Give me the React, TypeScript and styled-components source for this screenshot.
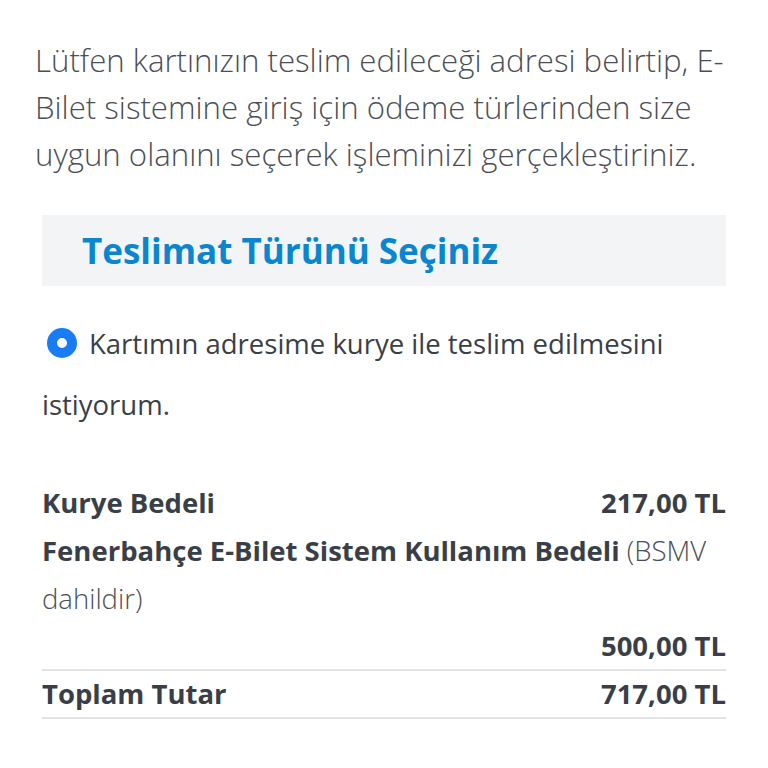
import React from "react";
import styled, { createGlobalStyle } from "styled-components";

const GlobalStyle = createGlobalStyle`
  body {
    margin: 0;
    background: #ffffff;
    font-family: "Open Sans", "Noto Sans", sans-serif;
  }
`;

const App: React.FC = () => {
  return (
    <>
      <GlobalStyle />
      <Root>
        <Intro>
          Lütfen kartınızın teslim edileceği adresi belirtip, E-Bilet sistemine
          giriş için ödeme türlerinden size uygun olanını seçerek işleminizi
          gerçekleştiriniz.
        </Intro>
        <Section>
          <SectionHeader>
            <SectionTitle>Teslimat Türünü Seçiniz</SectionTitle>
          </SectionHeader>
          <Option>
            <Radio />
            Kartımın adresime kurye ile teslim edilmesini istiyorum.
          </Option>
          <Summary>
            <Row>
              <Label>Kurye Bedeli</Label>
              <Amount>217,00 TL</Amount>
            </Row>
            <Block>
              <Label>Fenerbahçe E-Bilet Sistem Kullanım Bedeli</Label>{" "}
              <Note>(BSMV dahildir)</Note>
            </Block>
            <Row $bordered>
              <span />
              <Amount>500,00 TL</Amount>
            </Row>
            <Row $bordered>
              <Label>Toplam Tutar</Label>
              <Amount>717,00 TL</Amount>
            </Row>
          </Summary>
        </Section>
      </Root>
    </>
  );
};

export default App;

const Root = styled.div`
  width: 768px;
  padding: 37px 42px 0 35px;
  box-sizing: border-box;
`;
const Intro = styled.p`
  margin: 0 -5px 0 0;
  font-size: 31.2px;
  font-weight: 300;
  line-height: 47px;
  color: #4b4f55;
`;
const Section = styled.div`
  margin-top: 37px;
  padding-left: 7px;
`;
const SectionHeader = styled.div`
  background: #f3f4f6;
  height: 71px;
  display: flex;
  align-items: center;
  padding-left: 40px;
`;
const SectionTitle = styled.h2`
  margin: 0;
  font-size: 35px;
  font-weight: 700;
  color: #0a86d0;
`;
const Option = styled.div`
  margin-top: 27px;
  font-size: 27.5px;
  font-weight: 400;
  line-height: 61px;
  color: #3a3f47;
`;
const Radio = styled.span`
  display: inline-block;
  width: 30px;
  height: 30px;
  margin: 0 12px 0 5px;
  vertical-align: -4px;
  border-radius: 50%;
  box-sizing: border-box;
  border: 10px solid #1a7cf5;
  background: #ffffff;
`;
const Summary = styled.div`
  margin-top: 44px;
  font-size: 27.5px;
  color: #3a3f47;
`;
const Row = styled.div<{ $bordered?: boolean }>`
  display: flex;
  justify-content: space-between;
  align-items: center;
  line-height: ${({ $bordered }) => ($bordered ? "46px" : "48px")};
  border-bottom: ${({ $bordered }) =>
    $bordered ? "2px solid #e3e4e6" : "none"};
`;
const Block = styled.div`
  line-height: 48px;
`;
const Label = styled.span`
  font-weight: 700;
`;
const Amount = styled.span`
  font-weight: 700;
`;
const Note = styled.span`
  font-weight: 300;
  color: #4b4f55;
`;
